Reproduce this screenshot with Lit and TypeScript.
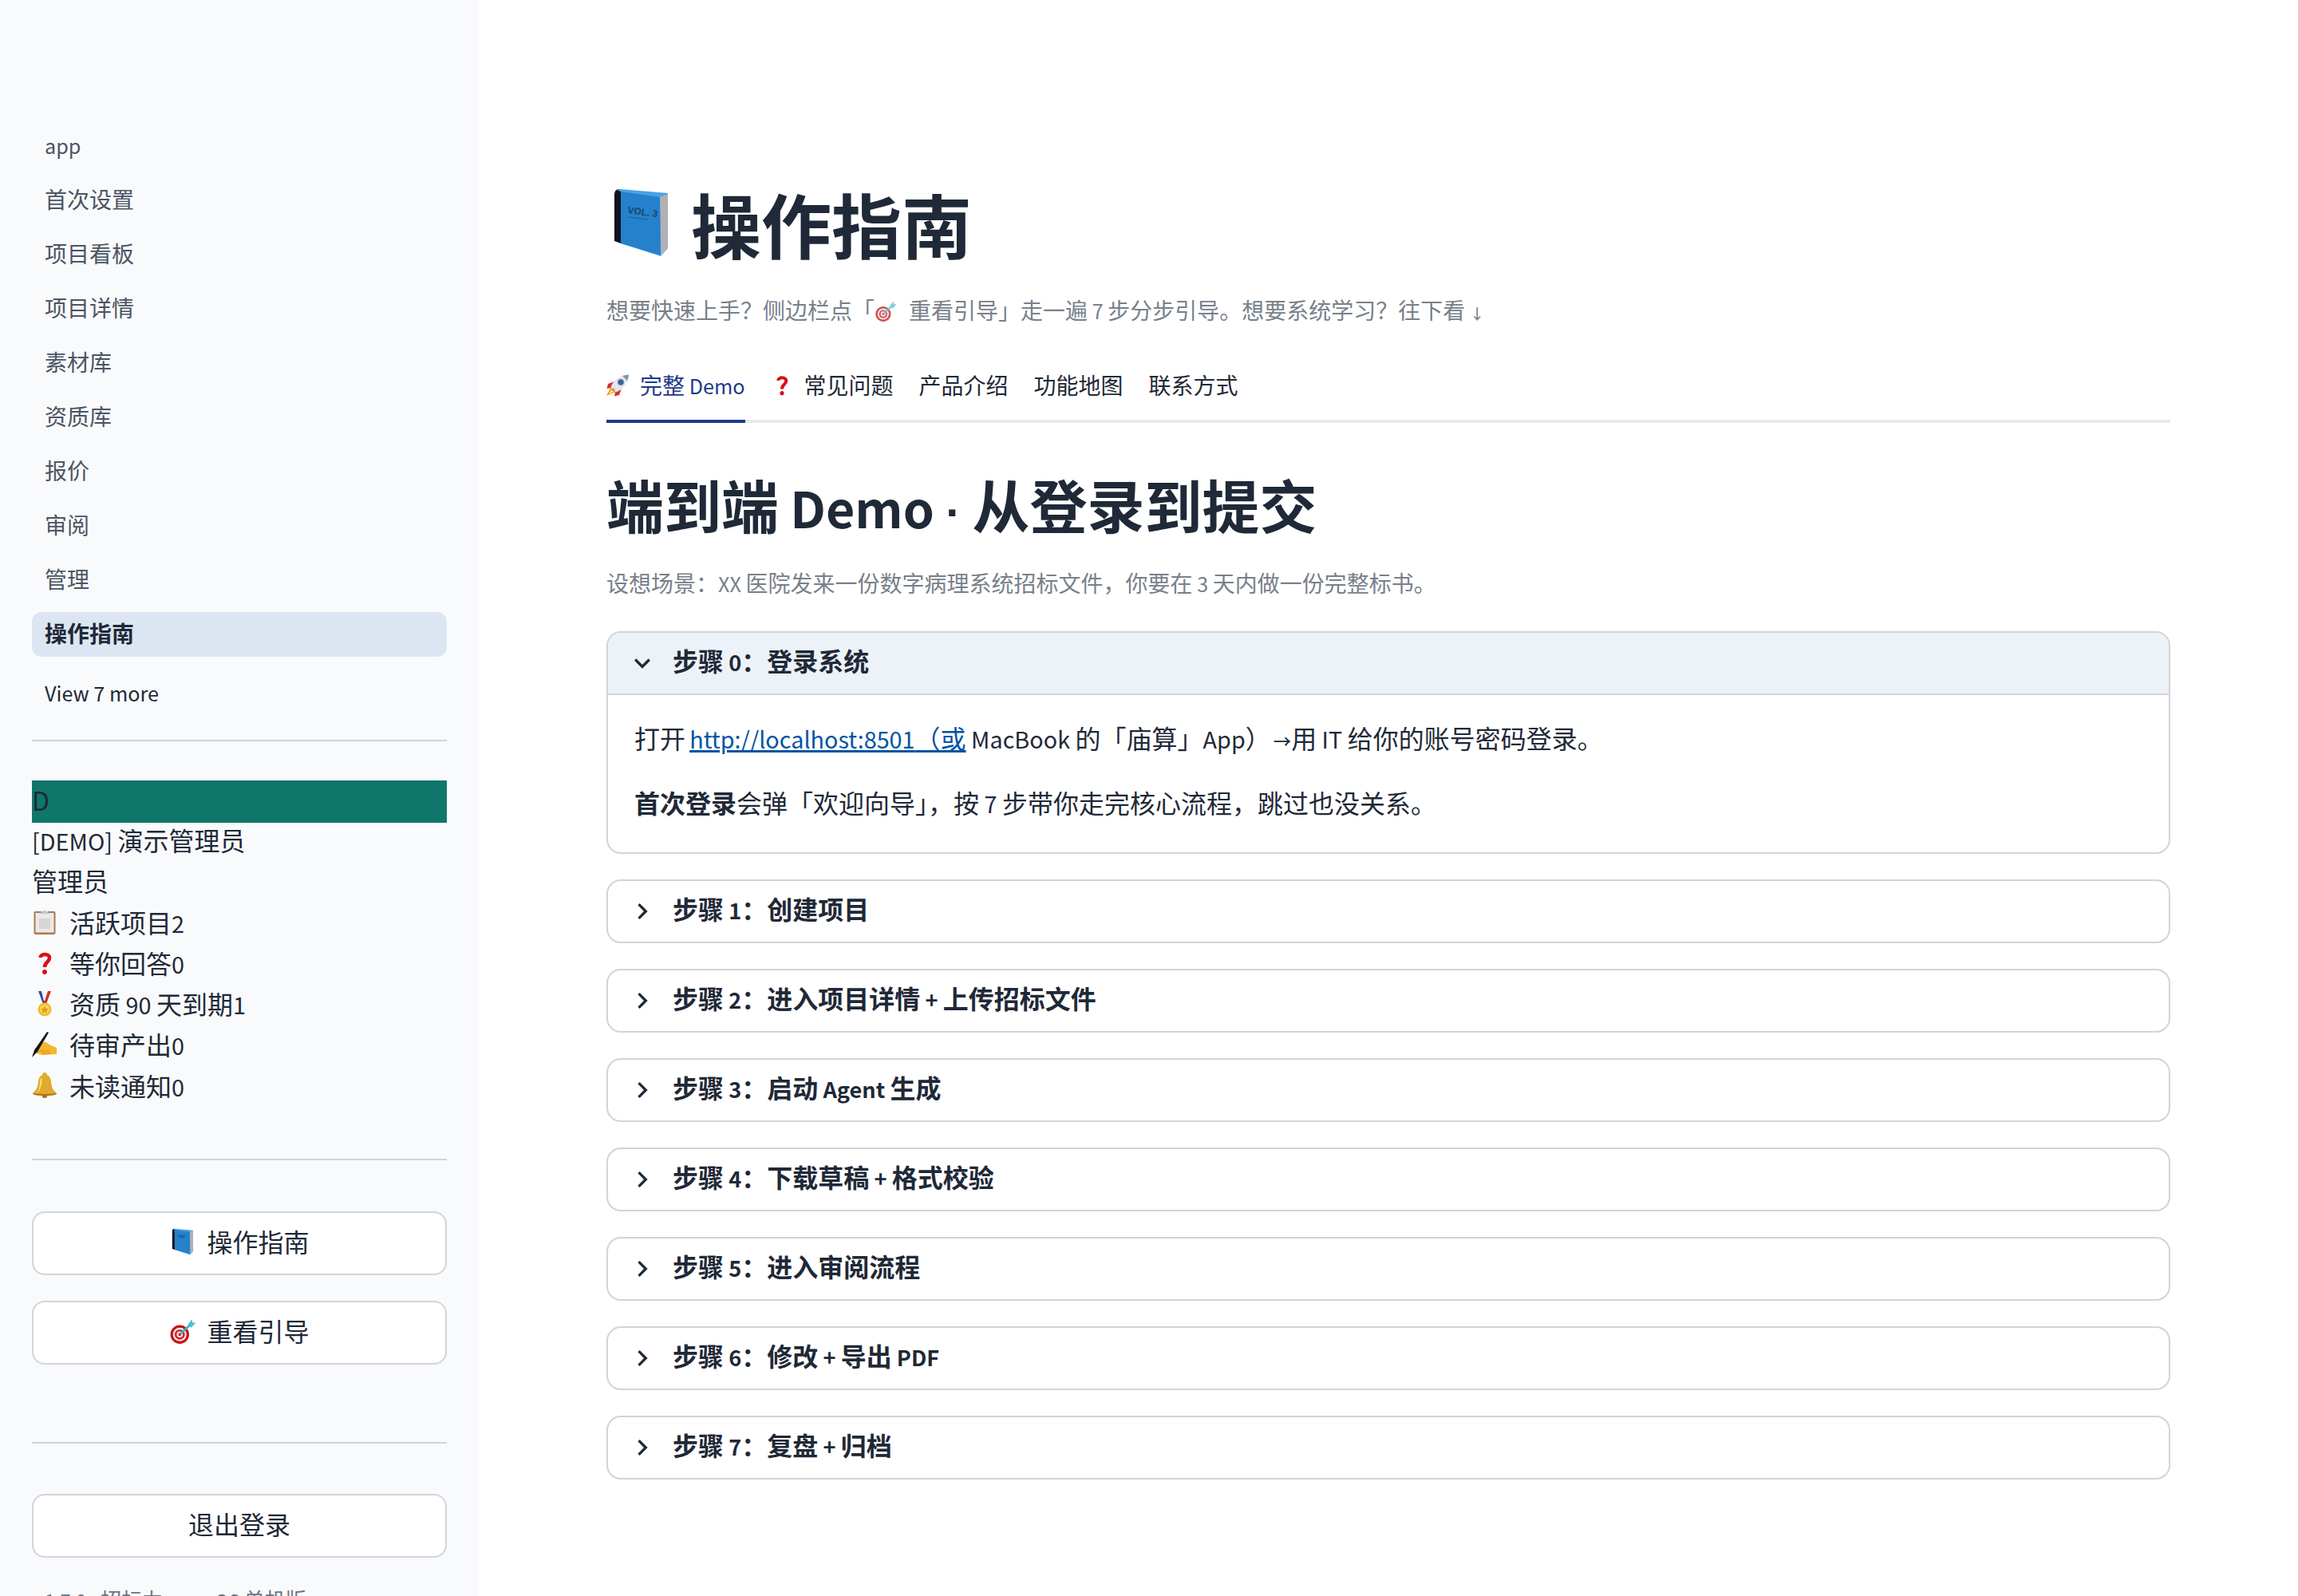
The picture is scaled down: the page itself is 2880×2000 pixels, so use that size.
import { LitElement, html, svg, css } from 'lit'
import { customElement } from 'lit/decorators.js'

// Colour emoji are drawn by hand, there is no emoji font to rely on
const book = (label = false) => html`<svg viewBox="0 0 88 88">
  <path d="M10 9 Q10 2 16 2 L18 3 L18 70 L10 67Z" fill="#11141d" />
  <path d="M13 3 L17 2 L77 7 L77 76 L68 86 L18 70 L18 5Z" fill="#4aa3e2" />
  <path d="M67 12 L77 8 L77 76 L68 85Z" fill="#b0b1b5" />
  <path d="M18 5 L67 12 L68 85 L18 70Z" fill="#2581cc" />
  ${label
    ? svg`<text x="26" y="32" font-size="12" font-family="Liberation Sans" fill="#17466f" transform="rotate(8 26 32)">VOL. 3</text>
        <path d="M27 37 L52 40" stroke="#1d5f9c" stroke-width="1.2" />`
    : svg`<path d="M28 22 L52 26 M30 28 L50 31" stroke="#1b4f86" stroke-width="2.4" />`}
</svg>`

const target = () => html`<svg viewBox="0 0 32 32">
  <circle cx="12.5" cy="20" r="11" fill="#c4151c" />
  <circle cx="12.5" cy="20" r="8" fill="#f3efe9" />
  <circle cx="12.5" cy="20" r="6" fill="#d3222a" />
  <circle cx="12.5" cy="20" r="3.6" fill="#f3efe9" />
  <circle cx="12.5" cy="20" r="1.8" fill="#d3222a" />
  <path d="M13 19.5 L26 7.5" stroke="#35b5c4" stroke-width="2.4" />
  <path d="M22 8 L27 2 L27.5 6 L31.5 6 L26 12Z" fill="#4cc3cf" />
</svg>`

const rocket = () => html`<svg viewBox="0 0 28 28">
  <path d="M6 16 L0 27 L12 22Z" fill="#f08a1d" />
  <path d="M6 19 L2.5 25.5 L9.5 22Z" fill="#fde35a" />
  <path d="M10 9 L2 12 L0.5 18 L6 17Z" fill="#d9301f" />
  <path d="M19 18 L16 26 L10 27.5 L11 22Z" fill="#d9301f" />
  <path d="M5.5 16.5 C8 8 16 1.5 28 0.5 C27 12 20 20 11.5 22.5Z" fill="#e4e8ee" />
  <path d="M20 2 C23 1.2 26 0.7 28 0.5 C27.8 3 27 5.5 26 8Z" fill="#7f93ad" />
  <path d="M8.5 17 L11.5 20 L9.5 21 L7 18.5Z" fill="#9aa4b2" />
  <circle cx="18" cy="10" r="3.4" fill="#2a62a8" stroke="#76818f" stroke-width="1.2" />
</svg>`

const question = () => html`<svg viewBox="0 0 32 32">
  <path d="M10.5 9 C11 3.5 22 3.5 22 9.5 C22 14.5 16 14.5 16 21" fill="none" stroke="#dc0d17" stroke-width="4.6" />
  <circle cx="16" cy="27" r="2.9" fill="#dc0d17" />
</svg>`

const clipboard = () => html`<svg viewBox="0 0 32 32">
  <rect x="2.5" y="3" width="27" height="29" rx="2" fill="#ad7b49" />
  <rect x="4.5" y="5" width="23" height="24.5" fill="#e9e9e9" />
  <path d="M9 12h14v13H9z" fill="#d6d6d6" />
  <path d="M10 6 L12 3 L14 3 Q16 0 18 3 L20 3 L22 6Z" fill="#b9c6d0" />
</svg>`

const medal = () => html`<svg viewBox="0 0 32 32">
  <path d="M8 0 L12 0 L17 15 L14 16Z" fill="#2c4aa8" />
  <path d="M24 0 L20 0 L15 15 L18 16Z" fill="#d42c2c" />
  <path d="M12 0 L15 0 L16.5 10 L15 13Z" fill="#f1f1f1" />
  <circle cx="16" cy="23" r="8.5" fill="#efbb2c" />
  <circle cx="16" cy="23" r="6" fill="#f8d65a" />
  <path d="M16 18.5 L17.5 21.8 L21 22.2 L18.4 24.5 L19.1 28 L16 26.2 L12.9 28 L13.6 24.5 L11 22.2 L14.5 21.8Z" fill="#dfa21d" />
</svg>`

const hand = () => html`<svg viewBox="0 0 32 32">
  <path d="M8 17 C12 14 16 11 19 14 C23 17 27 18 31 20 L31 28 L14 29 C9 28 5 27 4 25 C4 22 6 19 8 17Z" fill="#f7b52e" />
  <path d="M9 24 L22 24 M12 27 L24 27" stroke="#d98f1b" stroke-width="1" />
  <path d="M0 32 L3 23 L19 0 L21 1 L7 25Z" fill="#15161a" />
</svg>`

const bell = () => html`<svg viewBox="0 0 32 32">
  <circle cx="16" cy="29" r="3.2" fill="#a9741a" />
  <path d="M16 0 C18 0 19 1.5 19 3 C23.5 5 24 10 24.5 15 C25 20 28 23 31 26 C31 28 26 29 16 29 C6 29 1 28 1 26 C4 23 7 20 7.5 15 C8 10 8.5 5 13 3 C13 1.5 14 0 16 0Z" fill="#e0aa2e" />
  <path d="M12 6 C9.5 9 10 16 9 20 C8 23 6 25 5 26 C9 24 11 20 12 15 C12.5 11 13 8 12 6Z" fill="#f8dc7a" />
  <path d="M1 26 C1 28 6 29 16 29 C26 29 31 28 31 26 C26 27.2 6 27.2 1 26Z" fill="#a9741a" />
</svg>`

const chevron = (down: boolean) => html`<svg class="chev" viewBox="0 0 24 24">
  <path d=${down
    ? 'M16.59 8.59 12 13.17 7.41 8.59 6 10l6 6 6-6z'
    : 'M10 6 8.59 7.41 13.17 12l-4.58 4.58L10 18l6-6z'} />
</svg>`

const t = (text: string) =>
  (text.match(/[\x21-\x7e ]+|·|[→↓]|[^\x21-\x7e ·→↓]+/g) ?? []).map((run) => {
    if (run === '·') return html`<span class="dot">·</span>`
    if (run === '→' || run === '↓') return html`<span class="arrow">${run}</span>`
    return /^[\x21-\x7e ]/.test(run) ? html`<span class="la">${run}</span>` : run
  })

const NAV = ['app', '首次设置', '项目看板', '项目详情', '素材库', '资质库', '报价', '审阅', '管理', '操作指南']

const STATS = [
  [clipboard, '活跃项目2'],
  [question, '等你回答0'],
  [medal, '资质 90 天到期1'],
  [hand, '待审产出0'],
  [bell, '未读通知0'],
] as const

const STEPS = [
  '步骤 1：创建项目',
  '步骤 2：进入项目详情 + 上传招标文件',
  '步骤 3：启动 Agent 生成',
  '步骤 4：下载草稿 + 格式校验',
  '步骤 5：进入审阅流程',
  '步骤 6：修改 + 导出 PDF',
  '步骤 7：复盘 + 归档',
]

@customElement('app-root')
export class AppRoot extends LitElement {
  static styles = css`
    :host {
      display: flex;
      height: 2000px;
      overflow: hidden;
      background: #fff;
      color: #1f2937;
      font-family: 'Noto Sans CJK SC', 'Noto Sans', sans-serif;
      font-size: 32px;
      line-height: 51.3px;
    }
    svg {
      display: block;
      flex: none;
    }
    a {
      color: #0054a3;
    }
    .la,
    .dot,
    .arrow {
      line-height: 1;
    }
    .la {
      font-size: 0.9em;
    }
    .dot {
      font-family: 'Liberation Sans', sans-serif;
      font-size: 0.9em;
    }
    .arrow {
      font-size: 0.66em;
      font-weight: 500;
    }

    .side {
      box-sizing: border-box;
      width: 600px;
      flex: none;
      padding: 155px 40px 0;
      background: #f9fafc;
    }
    .nav {
      display: flex;
      flex-direction: column;
      gap: 12px;
    }
    .nav div {
      height: 56px;
      padding: 0 16px;
      border-radius: 12px;
      font-size: 28px;
      line-height: 52px;
      color: #4b5563;
    }
    .nav .on {
      background: #dce6f2;
      color: #1f2937;
      font-weight: 700;
    }
    .more {
      margin-top: 22px;
      padding-left: 16px;
      font-size: 28px;
      line-height: 44px;
    }
    .rule {
      height: 2px;
      background: #d1d4da;
    }
    .rule.a {
      margin-top: 38px;
    }
    .rule.b {
      margin-top: 66px;
    }
    .rule.c {
      margin-top: 97px;
    }
    .avatar {
      margin-top: 49px;
      height: 53px;
      background: #10766c;
      line-height: 48px;
    }
    .avatar .la {
      font-size: 1em;
    }
    .name {
      margin-top: -4px;
    }
    .stat {
      display: flex;
      align-items: center;
    }
    .stat svg {
      width: 32px;
      height: 32px;
      margin-right: 15px;
    }
    .btn {
      box-sizing: border-box;
      display: flex;
      align-items: center;
      justify-content: center;
      height: 80px;
      padding-bottom: 4px;
      border: 2px solid #d1d4da;
      border-radius: 16px;
      background: #fff;
    }
    .btn svg {
      width: 34px;
      height: 34px;
      margin-right: 13px;
    }
    .btn.first {
      margin-top: 64px;
    }
    .btn.next {
      margin-top: 32px;
    }
    .btn.out {
      margin-top: 63px;
    }
    .version {
      margin-top: 30px;
      padding-left: 16px;
      font-size: 26px;
      line-height: 44px;
      color: #6b7280;
      white-space: nowrap;
    }

    .main {
      flex: 1;
      min-width: 0;
      padding: 229px 160px 0;
    }
    h1 {
      display: flex;
      align-items: center;
      margin: 0;
      font-size: 88px;
      line-height: 100px;
      font-weight: 700;
    }
    h1 svg {
      width: 88px;
      height: 88px;
      margin-right: 18px;
    }
    .cap {
      font-size: 28px;
      line-height: 44px;
      color: #78808a;
    }
    .cap svg {
      display: inline-block;
      width: 28px;
      height: 28px;
      margin-right: 15px;
      vertical-align: -4px;
      opacity: 0.75;
    }
    .cap.top {
      margin-top: 37px;
    }
    .tabs {
      display: flex;
      gap: 32px;
      margin-top: 32px;
      height: 84px;
      box-shadow: 0 4px 0 #e8eaed;
    }
    .tab {
      box-sizing: border-box;
      display: flex;
      align-items: center;
      height: 84px;
      padding-bottom: 2px;
      font-size: 28px;
    }
    .tab svg {
      width: 28px;
      height: 28px;
      margin-right: 14px;
    }
    .tab.on {
      color: #1e3a8a;
      box-shadow: 0 4px 0 #1e3a8a;
    }
    h2 {
      margin: 55px 0 0;
      font-size: 72px;
      line-height: 100px;
      font-weight: 700;
    }
    h2 .la {
      font-size: 0.87em;
    }
    h2 .dot {
      font-size: 0.8em;
    }
    .cap.sub {
      margin-top: 27px;
    }
    .list {
      display: flex;
      flex-direction: column;
      gap: 32px;
      margin-top: 39px;
    }
    .exp {
      border: 2px solid #d1d4da;
      border-radius: 18px;
      overflow: hidden;
    }
    .head {
      box-sizing: border-box;
      display: flex;
      align-items: center;
      height: 76px;
      padding-left: 23px;
      font-weight: 600;
    }
    .head .label {
      margin-bottom: 6px;
    }
    .head .la {
      font-size: 0.85em;
    }
    .head.open {
      background: #edf2f9;
      border-bottom: 2px solid #d1d4da;
      height: 78px;
    }
    .chev {
      width: 40px;
      height: 40px;
      margin-right: 18px;
      fill: #1f2937;
    }
    .body {
      padding: 28px 33px 36px;
    }
    .body p {
      margin: 0;
    }
    .body p + p {
      margin-top: 30px;
    }
    .body a {
      margin-left: -2px;
    }
    .body .arrow {
      margin-left: 3px;
      font-size: 0.7em;
    }
  `

  render() {
    return html`
      <div class="side">
        <div class="nav">
          ${NAV.map((n) => html`<div class=${n === '操作指南' ? 'on' : ''}>${t(n)}</div>`)}
        </div>
        <div class="more">${t('View 7 more')}</div>
        <div class="rule a"></div>
        <div class="avatar">${t('D')}</div>
        <div class="name">${t('[DEMO] 演示管理员')}</div>
        <div>管理员</div>
        ${STATS.map(([icon, text]) => html`<div class="stat">${icon()}<span>${t(text)}</span></div>`)}
        <div class="rule b"></div>
        <div class="btn first">${book()}操作指南</div>
        <div class="btn next">${target()}重看引导</div>
        <div class="rule c"></div>
        <div class="btn out">退出登录</div>
        <div class="version">${t('1.7.0 · 招标力 · macOS 单机版')}</div>
      </div>
      <div class="main">
        <h1>${book(true)}操作指南</h1>
        <div class="cap top">
          想要快速上手？侧边栏点「${target()}重看引导」走一遍${t(' 7 ')}步分步引导。想要系统学习？往下看${t(' ↓')}
        </div>
        <div class="tabs">
          <div class="tab on">${rocket()}<span>${t('完整 Demo')}</span></div>
          <div class="tab">${question()}常见问题</div>
          <div class="tab">产品介绍</div>
          <div class="tab">功能地图</div>
          <div class="tab">联系方式</div>
        </div>
        <h2>${t('端到端 Demo · 从登录到提交')}</h2>
        <div class="cap sub">${t('设想场景：XX 医院发来一份数字病理系统招标文件，你要在 3 天内做一份完整标书。')}</div>
        <div class="list">
          <div class="exp">
            <div class="head open">${chevron(true)}<span class="label">${t('步骤 0：登录系统')}</span></div>
            <div class="body">
              <p>打开 <a href="#">${t('http://localhost:8501（或')}</a>${t(' MacBook 的「庙算」App）→用 IT 给你的账号密码登录。')}</p>
              <p><b>首次登录</b>${t('会弹「欢迎向导」，按 7 步带你走完核心流程，跳过也没关系。')}</p>
            </div>
          </div>
          ${STEPS.map((s) => html`<div class="exp"><div class="head">${chevron(false)}<span class="label">${t(s)}</span></div></div>`)}
        </div>
      </div>
    `
  }
}
